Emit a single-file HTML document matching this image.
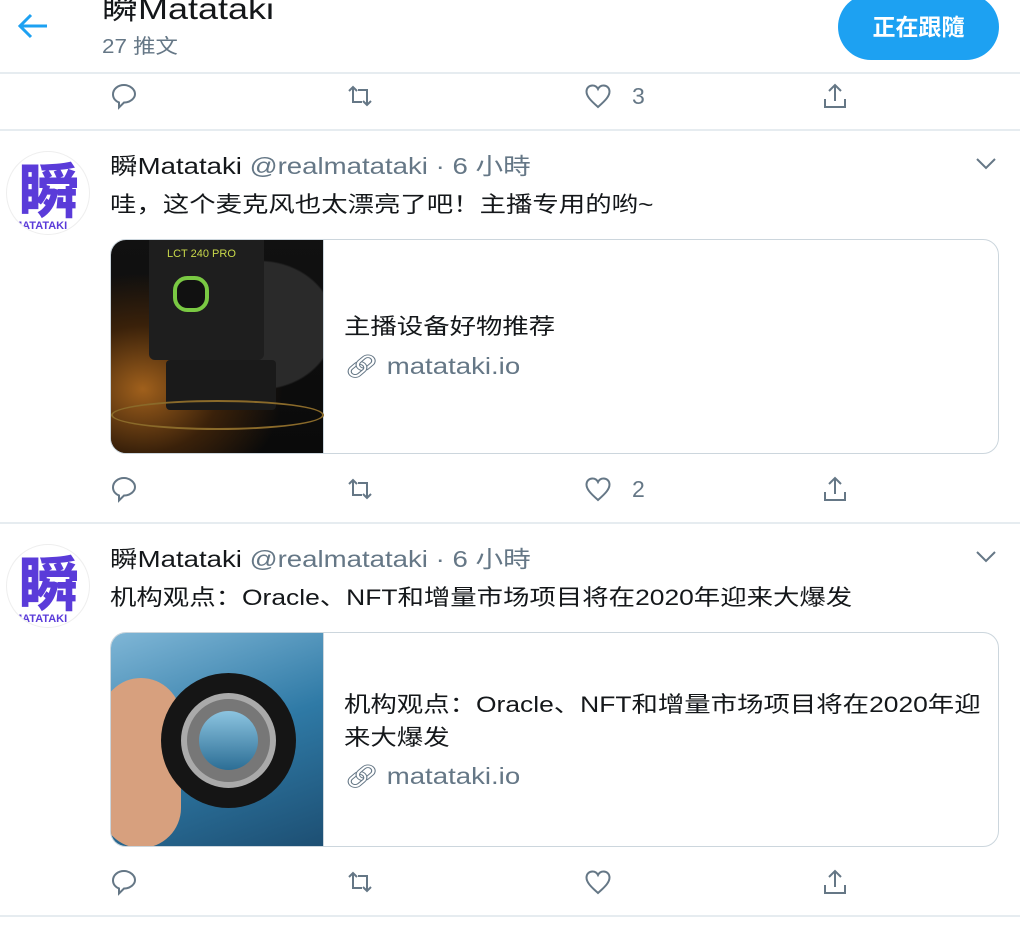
<!DOCTYPE html>
<html><head><meta charset="utf-8"><style>
*{margin:0;padding:0;box-sizing:border-box}
body{width:1020px;height:930px;background:#fff;position:relative;overflow:hidden;font-family:"Liberation Sans","Noto Sans CJK SC",sans-serif;color:#14171a}
.a{position:absolute;white-space:nowrap}
.s{transform:scaleX(1.2);transform-origin:0 0}
.hr{position:absolute;left:0;width:1020px;height:2px;background:#e6ecf0}
.g{color:#657786}
.ico{position:absolute;width:28px;height:28px}
.card{position:absolute;left:110px;width:889px;height:215px;border:1.5px solid #ccd6dd;border-radius:16px;overflow:hidden}
.img{position:absolute;left:0;top:0;width:213px;height:100%;border-right:1.5px solid #ccd6dd}
.av{position:absolute;left:6px;width:84px;height:84px;border-radius:50%;border:1px solid #eee;overflow:hidden;background:#fff}
.av b{position:absolute;left:12px;top:0;font-size:60px;color:#5a3bd9;font-family:"Noto Sans CJK SC",sans-serif;font-weight:900;line-height:72px}
.av i{position:absolute;left:6px;top:68px;font-size:11px;color:#5a3bd9;font-style:normal;font-weight:bold}
.chev{position:absolute;left:975px;width:22px;height:14px}
.nm{font-size:23px;line-height:32px;transform:scaleX(1.2);transform-origin:0 0}
</style></head><body>
<svg class="a" style="left:16px;top:12px" width="34" height="28" viewBox="0 0 34 28"><path d="M31 14H5M15 3L4 14l11 11" fill="none" stroke="#1da1f2" stroke-width="3"/></svg>
<div class="a s" style="left:102px;top:-10px;font-size:30px;line-height:40px">瞬Matataki</div>
<div class="a g" style="left:102px;top:33px;font-size:20px;line-height:28px;transform:scaleX(1.12);transform-origin:0 0">27 推文</div>
<div class="a" style="left:838px;top:-6px;width:161px;height:66px;border-radius:33px;background:#1da1f2;color:#fff;font-size:23px;font-weight:bold;text-align:center;line-height:66px">正在跟隨</div>
<div class="hr" style="top:72px"></div>

<div id="r1"></div>
<div class="hr" style="top:129px"></div>

<div class="av" style="top:151px"><b>瞬</b><i>MATATAKI</i></div>
<div class="a nm" style="left:110px;top:150px">瞬Matataki <span class="g">@realmatataki · 6 小時</span></div>
<svg class="chev" style="top:156px" viewBox="0 0 22 14"><path d="M2 3l9 9 9-9" fill="none" stroke="#657786" stroke-width="2"/></svg>
<div class="a s" style="left:110px;top:189px;font-size:22px;line-height:32px">哇，这个麦克风也太漂亮了吧！主播专用的哟~</div>
<div class="card" style="top:239px">
<div class="img" style="background:radial-gradient(ellipse at 70% 40%,#2a2a2a 0 35%,transparent 36%),radial-gradient(ellipse at 15% 70%,#a0601c 0,#3a210a 30%,transparent 55%),linear-gradient(#111,#0a0a0a)">
<div class="a" style="left:38px;top:0;width:115px;height:120px;background:#1e1e1e;border-radius:0 0 6px 6px"></div>
<div class="a" style="left:56px;top:8px;font-size:11px;color:#c8d84a">LCT 240 PRO</div>
<div class="a" style="left:62px;top:36px;width:36px;height:36px;border-radius:40%;background:#111;border:4px solid #7ac943"></div>
<div class="a" style="left:55px;top:120px;width:110px;height:50px;background:#1a1a1a;border-radius:4px"></div>
<div class="a" style="left:0;top:160px;width:213px;height:30px;border-radius:50%;border:2px solid #8a6a2a"></div>
</div>
<div class="a s" style="left:233px;top:71px;font-size:22px;line-height:32px">主播设备好物推荐</div>
<div class="a g s" style="left:233px;top:110px;font-size:23px;line-height:32px">🔗︎ matataki.io</div>
</div>
<div id="r2"></div>
<div class="hr" style="top:522px"></div>

<div class="av" style="top:544px"><b>瞬</b><i>MATATAKI</i></div>
<div class="a nm" style="left:110px;top:543px">瞬Matataki <span class="g">@realmatataki · 6 小時</span></div>
<svg class="chev" style="top:549px" viewBox="0 0 22 14"><path d="M2 3l9 9 9-9" fill="none" stroke="#657786" stroke-width="2"/></svg>
<div class="a s" style="left:110px;top:582px;font-size:22px;line-height:32px">机构观点：Oracle、NFT和增量市场项目将在2020年迎来大爆发</div>
<div class="card" style="top:632px">
<div class="img" style="background:linear-gradient(160deg,#7fb6d6,#2f7aa6 50%,#1d4f73)">
<div class="a" style="left:-10px;top:45px;width:80px;height:170px;background:#d7a07e;border-radius:40px"></div>
<div class="a" style="left:50px;top:40px;width:135px;height:135px;border-radius:50%;background:#151515"></div>
<div class="a" style="left:70px;top:60px;width:95px;height:95px;border-radius:50%;background:#777;border:6px solid #aaa"></div>
<div class="a" style="left:88px;top:78px;width:59px;height:59px;border-radius:50%;background:linear-gradient(#8cc4e0,#2c6e95)"></div>
</div>
<div class="a s" style="left:233px;top:55px;font-size:22px;line-height:33px;white-space:normal;width:535px">机构观点：Oracle、NFT和增量市场项目将在2020年迎来大爆发</div>
<div class="a g s" style="left:233px;top:127px;font-size:23px;line-height:32px">🔗︎ matataki.io</div>
</div>
<div id="r3"></div>
<div class="hr" style="top:915px"></div>

<script>
function row(id,y,c){
var s='';
s+='<svg class="ico" style="left:110px;top:'+(y-14)+'px" viewBox="0 0 28 28"><path d="M14 3C8 3 3 7 3 12.5c0 4 3 7 6 8v5l5-5c6 0 11-4 11-8.5S20 3 14 3z" fill="none" stroke="#657786" stroke-width="2"/></svg>';
s+='<svg class="ico" style="left:346px;top:'+(y-14)+'px" viewBox="0 0 28 28"><path d="M3 9l4-4 4 4M7 5v15h9M25 19l-4 4-4-4M21 23V8h-9" fill="none" stroke="#657786" stroke-width="2"/></svg>';
s+='<svg class="ico" style="left:584px;top:'+(y-14)+'px" viewBox="0 0 28 28"><path d="M14 25C6 18 2.5 14 2.5 9.5 2.5 6 5 3.5 8.5 3.5c2.5 0 4.5 1.5 5.5 3.5 1-2 3-3.5 5.5-3.5 3.5 0 6 2.5 6 6C25.5 14 22 18 14 25z" fill="none" stroke="#657786" stroke-width="2"/></svg>';
if(c)s+='<div class="a g" style="left:632px;top:'+(y-16)+'px;font-size:23px;line-height:32px">'+c+'</div>';
s+='<svg class="ico" style="left:821px;top:'+(y-14)+'px" viewBox="0 0 28 28"><path d="M14 3v16M8 9l6-6 6 6M4 17v8h20v-8" fill="none" stroke="#657786" stroke-width="2"/></svg>';
document.getElementById(id).outerHTML=s;}
row('r1',96,'3');row('r2',489,'2');row('r3',882,'');
</script>
</body></html>
